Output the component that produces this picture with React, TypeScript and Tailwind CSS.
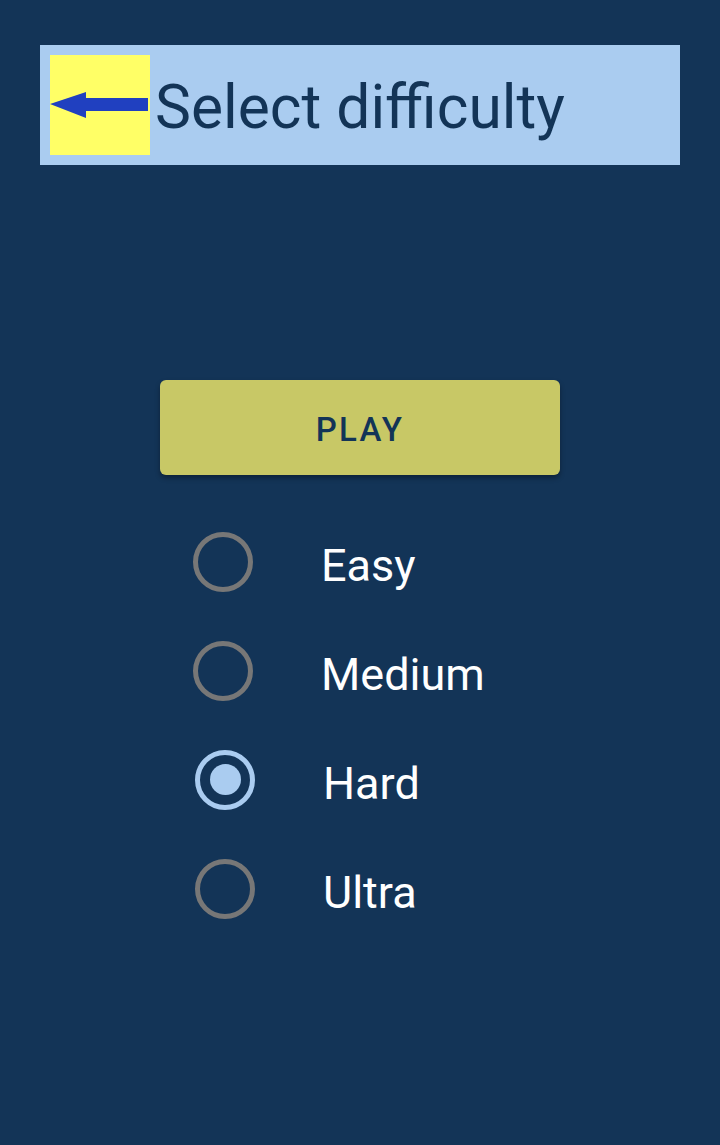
import React, { useState } from 'react';

const levels = [
  { name: 'Easy', shift: 'ml-[193px]' },
  { name: 'Medium', shift: 'ml-[193px]' },
  { name: 'Hard', shift: 'ml-[195px]' },
  { name: 'Ultra', shift: 'ml-[195px]' },
];

const BackArrow: React.FC = () => (
  <svg width="100" height="100" viewBox="0 0 100 100">
    <polygon points="0,49 36,37 36,43 98,43 98,56 36,56 36,63" fill="#2040c0" />
  </svg>
);

const App: React.FC = () => {
  const [level, setLevel] = useState('Hard');

  return (
    <div className="min-h-[1145px] w-full bg-[#133457] pt-[45px] font-['Roboto',sans-serif]">
      <div className="mx-[40px] flex h-[120px] items-center bg-[#aaccf0] px-[10px]">
        <div className="flex h-[100px] w-[100px] items-center bg-[#ffff66]">
          <BackArrow />
        </div>
        <h1 className="ml-[5px] pt-[6px] text-[60.5px] leading-none text-[#133457]">Select difficulty</h1>
      </div>

      <button className="mx-auto mt-[215px] flex h-[95px] w-[400px] items-center justify-center rounded-[6px] bg-[#c8c866] pt-[5px] text-[33px] font-medium tracking-[0.07em] text-[#133457] shadow-[0_3px_5px_rgba(0,0,0,0.35)]">
        PLAY
      </button>

      <div className="mt-[32px] flex flex-col">
        {levels.map((l) => {
          const on = l.name === level;
          return (
            <label
              key={l.name}
              onClick={() => setLevel(l.name)}
              className={`flex h-[109px] cursor-pointer items-center ${l.shift}`}
            >
              <span
                className={`flex h-[60px] w-[60px] items-center justify-center rounded-full border-[5px] ${
                  on ? 'border-[#aaccf0]' : 'border-[#777777]'
                }`}
              >
                {on && <span className="h-[31px] w-[31px] rounded-full bg-[#aaccf0]" />}
              </span>
              <span className="ml-[68px] pt-[7px] text-[45px] leading-none text-white">{l.name}</span>
            </label>
          );
        })}
      </div>
    </div>
  );
};

export default App;
